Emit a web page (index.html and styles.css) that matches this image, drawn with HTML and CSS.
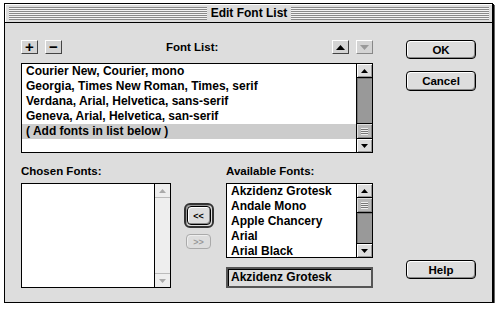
FILE: index.html
```html
<!DOCTYPE html>
<html lang="en">
<head>
  <meta charset="UTF-8" />
  <title>Edit Font List</title>
  <link rel="stylesheet" href="styles.css">
</head>
<body>
  <div class="window">
    <div class="titlebar">
      <div class="stripes"><span class="title">Edit Font List</span></div>
    </div>

    <div class="content">
      <div class="main">
        <div class="toolbar">
          <div class="bevel">+</div>
          <div class="bevel">&minus;</div>
          <span class="label list-label">Font List:</span>
          <span class="spacer"></span>
          <div class="bevel">
            <svg width="9" height="5" viewBox="0 0 9 5"><polygon points="0,5 9,5 4.5,0" /></svg>
          </div>
          <div class="bevel off">
            <svg width="9" height="5" viewBox="0 0 9 5"><polygon points="0,0 9,0 4.5,5" /></svg>
          </div>
        </div>

        <div class="listbox font-list">
          <ul class="rows">
            <li>Courier New, Courier, mono</li>
            <li>Georgia, Times New Roman, Times, serif</li>
            <li>Verdana, Arial, Helvetica, sans-serif</li>
            <li>Geneva, Arial, Helvetica, san-serif</li>
            <li class="selected">( Add fonts in list below )</li>
          </ul>
          <div class="scrollbar">
            <div class="arrow up"><svg width="7" height="4" viewBox="0 0 7 4"><polygon points="0,4 7,4 3.5,0" /></svg></div>
            <div class="track"></div>
            <div class="thumb"><span class="grip"></span></div>
            <div class="arrow down"><svg width="7" height="4" viewBox="0 0 7 4"><polygon points="0,0 7,0 3.5,4" /></svg></div>
          </div>
        </div>

        <div class="lower">
          <div class="label">Chosen Fonts:</div>
          <div></div>
          <div class="label">Available Fonts:</div>

          <div class="listbox chosen-list">
            <ul class="rows"></ul>
            <div class="scrollbar off">
              <div class="arrow up"><svg width="7" height="4" viewBox="0 0 7 4"><polygon points="0,4 7,4 3.5,0" /></svg></div>
              <div class="track"></div>
              <div class="arrow down"><svg width="7" height="4" viewBox="0 0 7 4"><polygon points="0,0 7,0 3.5,4" /></svg></div>
            </div>
          </div>

          <div class="mover">
            <div class="ring"><div class="btn small">&lt;&lt;</div></div>
            <div class="btn small off">&gt;&gt;</div>
          </div>

          <div class="available">
            <div class="listbox avail-list">
              <ul class="rows">
                <li>Akzidenz Grotesk</li>
                <li>Andale Mono</li>
                <li>Apple Chancery</li>
                <li>Arial</li>
                <li>Arial Black</li>
              </ul>
              <div class="scrollbar">
                <div class="arrow up"><svg width="7" height="4" viewBox="0 0 7 4"><polygon points="0,4 7,4 3.5,0" /></svg></div>
                <div class="thumb"><span class="grip"></span></div>
                <div class="track"></div>
                <div class="arrow down"><svg width="7" height="4" viewBox="0 0 7 4"><polygon points="0,0 7,0 3.5,4" /></svg></div>
              </div>
            </div>
            <div class="field">Akzidenz Grotesk</div>
          </div>
        </div>
      </div>

      <div class="side">
        <div class="btn">OK</div>
        <div class="btn cancel">Cancel</div>
        <div class="btn help">Help</div>
      </div>
    </div>
  </div>
</body>
</html>
```

FILE: styles.css
```css
body {
  margin: 0;
  padding: 3px 0 0 4px;
  background: #fff;
  font-family: 'Liberation Sans', Arial, sans-serif;
  font-size: 11px;
  font-weight: bold;
  color: #000;
}

.window {
  width: 489px;
  height: 300px;
  box-sizing: border-box;
  border: 1px solid #000;
  background: #dddddd;
  box-shadow: 1px 1px 0 #000, 2px 2px 0 #666;
}

/* title bar */
.titlebar {
  height: 19px;
  border-bottom: 1px solid #000;
  padding: 3px 3px 0 4px;
  box-sizing: border-box;
  background: #dddddd;
  box-shadow: inset 1px 1px 0 #fff;
}

.stripes {
  height: 13px;
  background: repeating-linear-gradient(#8a8a8a 0 1px, #f4f4f4 1px 2px);
  display: flex;
  justify-content: center;
  align-items: center;
}

.title {
  background: #dddddd;
  padding: 0 4px;
  font-size: 12px;
  line-height: 15px;
}

/* body */
.content {
  display: flex;
  padding: 17px 0 0 16px;
  height: 263px;
  box-sizing: border-box;
}

.main {
  width: 352px;
}

.toolbar {
  display: flex;
  align-items: center;
  gap: 7px;
  height: 14px;
}

.bevel {
  width: 17px;
  height: 14px;
  box-sizing: border-box;
  border: 1px solid #777;
  border-color: #fff #444 #444 #fff;
  background: #d4d4d4;
  display: flex;
  align-items: center;
  justify-content: center;
  font-size: 15px;
  line-height: 12px;
}

.bevel svg polygon { fill: #000; }
.bevel.off svg polygon { fill: #999; }
.bevel.off { border-color: #fff #888 #888 #fff; }

.list-label {
  margin-left: 97px;
}

.spacer { flex: 1; }

.label {
  height: 14px;
  line-height: 14px;
  font-size: 11.5px;
}

/* list boxes */
.listbox {
  display: flex;
  border: 1px solid #000;
  background: #fff;
  box-sizing: border-box;
}

.rows {
  flex: 1;
  margin: 0;
  padding: 0;
  list-style: none;
  font-size: 12px;
}

.rows li {
  height: 15px;
  line-height: 15px;
  padding-left: 4px;
  white-space: nowrap;
  overflow: hidden;
}

.rows li.selected {
  background: #cccccc;
}

.font-list {
  margin-top: 9px;
  height: 90px;
}

.scrollbar {
  width: 15px;
  border-left: 1px solid #000;
  display: flex;
  flex-direction: column;
  background: #dddddd;
}

.arrow {
  height: 13px;
  display: flex;
  align-items: center;
  justify-content: center;
  background: #dddddd;
  box-shadow: inset 1px 1px 0 #fff, inset -1px -1px 0 #999;
}

.arrow.up { border-bottom: 1px solid #000; }
.arrow.down { border-top: 1px solid #000; }
.arrow svg polygon { fill: #000; }

.track {
  flex: 1;
  background: #999999;
  box-shadow: inset 1px 1px 0 #777;
}

.thumb {
  height: 14px;
  border-top: 1px solid #000;
  background: #b8b8b8;
  display: flex;
  align-items: center;
  justify-content: center;
  box-shadow: inset 1px 1px 0 #dedede, inset -1px -1px 0 #888;
}

.avail-list .thumb {
  border-top: none;
  border-bottom: 1px solid #000;
}

.grip {
  width: 7px;
  height: 7px;
  background: repeating-linear-gradient(#eee 0 1px, #777 1px 2px);
}

.scrollbar.off {
  background: #eeeeee;
}

.scrollbar.off .track {
  background: #eeeeee;
  box-shadow: none;
}

.scrollbar.off .arrow {
  background: #eeeeee;
  box-shadow: none;
}

.scrollbar.off .arrow.up { border-bottom-color: #bbb; }
.scrollbar.off .arrow.down { border-top-color: #bbb; }
.scrollbar.off .arrow svg polygon { fill: #aaa; }

/* lower section */
.lower {
  margin-top: 11px;
  display: grid;
  grid-template-columns: 150px 30px 147px;
  grid-template-rows: 14px 105px;
  column-gap: 12px;
  row-gap: 5px;
  justify-content: space-between;
}

.chosen-list {
  height: 105px;
}

.mover {
  display: flex;
  flex-direction: column;
  align-items: center;
  padding-top: 20px;
}

.ring {
  border: 2px solid #333;
  border-radius: 6px;
  padding: 1px;
  box-shadow: inset 1px 1px 0 #999;
}

.btn {
  height: 19px;
  box-sizing: border-box;
  border: 1px solid #000;
  border-radius: 4px;
  background: #dddddd;
  box-shadow: inset 1px 1px 0 #fff, inset -1px -1px 0 #888;
  display: flex;
  align-items: center;
  justify-content: center;
  font-size: 11.5px;
}

.btn.small {
  width: 24px;
  font-size: 9px;
}

.btn.small.off {
  margin-top: 6px;
  width: 25px;
  height: 15px;
  border-color: #aaa;
  color: #999;
  box-shadow: inset 1px 1px 0 #eee;
}

.available {
  display: flex;
  flex-direction: column;
}

.avail-list {
  height: 75px;
}

.field {
  margin-top: 9px;
  height: 21px;
  box-sizing: border-box;
  border: 2px solid #555;
  box-shadow: inset 1px 1px 0 #000;
  background: #dddddd;
  padding-left: 3px;
  line-height: 17px;
  font-size: 12px;
}

/* right button column */
.side {
  width: 70px;
  margin-left: 33px;
  display: flex;
  flex-direction: column;
}

.cancel {
  margin-top: 12px;
  height: 20px;
}

.help {
  margin-top: auto;
  margin-bottom: 7px;
}
```
